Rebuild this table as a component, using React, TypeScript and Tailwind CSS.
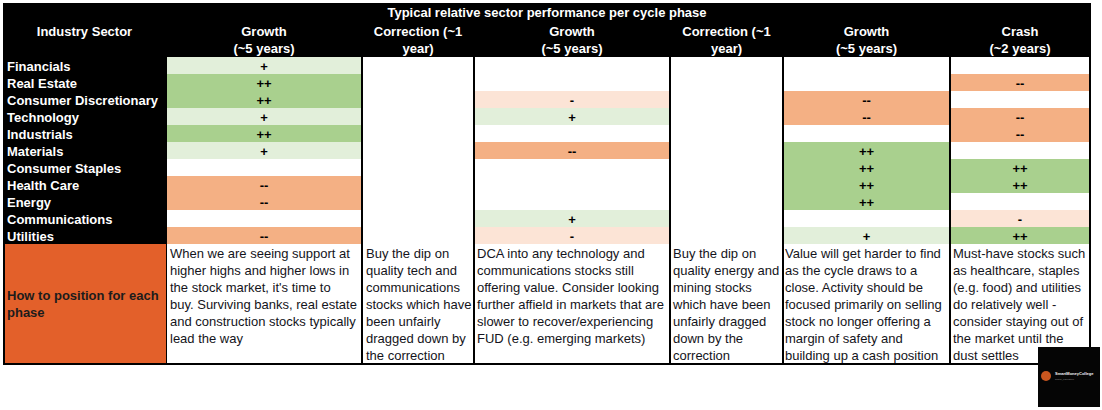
import React from 'react';

type Tone = 'w' | 'lg' | 'g' | 'o' | 'lo';

const toneClass: Record<Tone, string> = {
  w: 'bg-white',
  lg: 'bg-[#e2efda]',
  g: 'bg-[#a9d08e]',
  o: 'bg-[#f4b084]',
  lo: 'bg-[#fce4d6]',
};

const sectors = [
  'Financials',
  'Real Estate',
  'Consumer Discretionary',
  'Technology',
  'Industrials',
  'Materials',
  'Consumer Staples',
  'Health Care',
  'Energy',
  'Communications',
  'Utilities',
];

type Phase = {
  head: string[];
  width: string;
  pad: string;
  cells: [string, Tone][];
  text: string[];
};

const blank: [string, Tone][] = sectors.map(() => ['', 'w']);

const phases: Phase[] = [
  {
    head: ['Growth', '(~5 years)'],
    width: 'w-[194px]',
    pad: 'pl-[3px]',
    cells: [
      ['+', 'lg'], ['++', 'g'], ['++', 'g'], ['+', 'lg'], ['++', 'g'], ['+', 'lg'],
      ['', 'w'], ['--', 'o'], ['--', 'o'], ['', 'w'], ['--', 'o'],
    ],
    text: [
      'When we are seeing support at',
      'higher highs and higher lows in',
      "the stock market, it's time to",
      'buy. Surviving banks, real estate',
      'and construction stocks typically',
      'lead the way',
    ],
  },
  {
    head: ['Correction (~1', 'year)'],
    width: 'w-[110px]',
    pad: 'pl-[3px]',
    cells: blank,
    text: [
      'Buy the dip on',
      'quality tech and',
      'communications',
      'stocks which have',
      'been unfairly',
      'dragged down by',
      'the correction',
    ],
  },
  {
    head: ['Growth', '(~5 years)'],
    width: 'w-[194px]',
    pad: 'pl-[2px]',
    cells: [
      ['', 'w'], ['', 'w'], ['-', 'lo'], ['+', 'lg'], ['', 'w'], ['--', 'o'],
      ['', 'w'], ['', 'w'], ['', 'w'], ['+', 'lg'], ['-', 'lo'],
    ],
    text: [
      'DCA into any technology and',
      'communications stocks still',
      'offering value. Consider looking',
      'further affield in markets that are',
      'slower to recover/experiencing',
      'FUD (e.g. emerging markets)',
    ],
  },
  {
    head: ['Correction (~1', 'year)'],
    width: 'w-[111px]',
    pad: 'pl-[2px]',
    cells: blank,
    text: [
      'Buy the dip on',
      'quality energy and',
      'mining stocks',
      'which have been',
      'unfairly dragged',
      'down by the',
      'correction',
    ],
  },
  {
    head: ['Growth', '(~5 years)'],
    width: 'w-[165px]',
    pad: 'pl-[1px]',
    cells: [
      ['', 'w'], ['', 'w'], ['--', 'o'], ['--', 'o'], ['', 'w'], ['++', 'g'],
      ['++', 'g'], ['++', 'g'], ['++', 'g'], ['', 'w'], ['+', 'lg'],
    ],
    text: [
      'Value will get harder to find',
      'as the cycle draws to a',
      'close. Activity should be',
      'focused primarily on selling',
      'stock no longer offering a',
      'margin of safety and',
      'building up a cash position',
    ],
  },
  {
    head: ['Crash', '(~2 years)'],
    width: 'w-[138px]',
    pad: 'pl-[2px]',
    cells: [
      ['', 'w'], ['--', 'o'], ['', 'w'], ['--', 'o'], ['--', 'o'], ['', 'w'],
      ['++', 'g'], ['++', 'g'], ['', 'w'], ['-', 'lo'], ['++', 'g'],
    ],
    text: [
      'Must-have stocks such',
      'as healthcare, staples',
      '(e.g. food) and utilities',
      'do relatively well -',
      'consider staying out of',
      'the market until the',
      'dust settles',
    ],
  },
];

const Logo = () => (
  <div className="absolute left-[1038px] top-[347px] w-[62px] h-[60px] bg-[#050505]">
    <svg width="62" height="60" viewBox="0 0 62 60">
      <circle cx="8" cy="29" r="5" fill="#c9561f" />
      <text x="17" y="28" fontSize="4" fontWeight="bold" fill="#f2f2f2" fontFamily="Liberation Sans, Arial, sans-serif">
        SmartMoneyCollege
      </text>
      <text x="17" y="33" fontSize="2.5" fill="#8a8a8a" fontFamily="Liberation Sans, Arial, sans-serif">
        global_education
      </text>
    </svg>
  </div>
);

export default function App() {
  return (
    <div className="relative w-[1102px] h-[410px] bg-white font-['Liberation_Sans',Arial,sans-serif] text-[13px]">
      <div className="ml-[3px] pt-[3px]">
        <div className="w-[1088px] bg-black pb-[2px]">
          <div className="h-[17px] leading-[19px] text-center font-bold text-white">
            Typical relative sector performance per cycle phase
          </div>
          <div className="flex">
            <div className="w-[163px] mr-[1px] flex flex-col">
              <div className="h-[37px] pt-[3px] leading-[17px] text-center font-bold text-white">
                Industry Sector
              </div>
              {sectors.map((s) => (
                <div key={s} className="h-[17px] pl-[4px] leading-[19px] font-bold text-white whitespace-nowrap">
                  {s}
                </div>
              ))}
              <div className="ml-[2px] h-[119px] bg-[#e3602a] flex items-center pl-[2px] leading-[17px] font-bold text-[#1c1c1c]">
                How to position for each
                <br />
                phase
              </div>
            </div>
            {phases.map((p, i) => (
              <div key={i} className={`${p.width} mr-[2px] flex flex-col`}>
                <div className="h-[37px] pt-[3px] leading-[17px] text-center font-bold text-white whitespace-nowrap">
                  {p.head[0]}
                  <br />
                  {p.head[1]}
                </div>
                {p.cells.map(([sign, tone], j) => (
                  <div key={j} className={`h-[17px] leading-[19px] text-center font-bold text-black ${toneClass[tone]}`}>
                    {sign}
                  </div>
                ))}
                <div className={`h-[119px] bg-white pt-[1px] leading-[17px] text-[#141420] whitespace-nowrap ${p.pad}`}>
                  {p.text.map((line) => (
                    <div key={line}>{line}</div>
                  ))}
                </div>
              </div>
            ))}
          </div>
        </div>
      </div>
      <Logo />
    </div>
  );
}
